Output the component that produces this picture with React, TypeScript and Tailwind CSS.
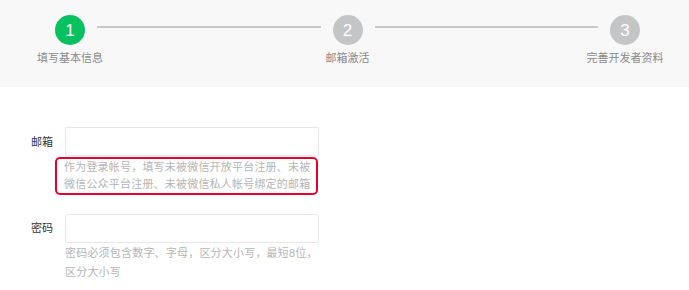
import React from 'react'

const font = { fontFamily: '"Helvetica Neue", "Liberation Sans", "Noto Sans CJK SC", sans-serif' }

function Step({ num, label, active }: { num: number; label: string; active?: boolean }) {
  return (
    <div className="flex w-[30px] shrink-0 flex-col items-center">
      <div
        className={`flex h-[30px] w-[30px] items-center justify-center rounded-full text-[17px] leading-none text-white ${
          active ? 'bg-[#07c160]' : 'bg-[#c4c5c7]'
        }`}
      >
        {num}
      </div>
      <div className="mt-[5px] whitespace-nowrap text-[11px] leading-[16px] text-[#8a8a8a]">{label}</div>
    </div>
  )
}

function Line() {
  return <div className="mx-[12px] mt-[11px] h-[2px] flex-1 bg-[#c9c9c9]" />
}

export default function App() {
  return (
    <div className="h-[290px] w-[689px] overflow-hidden bg-white" style={font}>
      {/* steps */}
      <div className="flex h-[87px] items-start bg-[#f8f8f8] pl-[55px] pr-[49px] pt-[15px]">
        <Step num={1} label="填写基本信息" active />
        <Line />
        <Step num={2} label="邮箱激活" />
        <Line />
        <Step num={3} label="完善开发者资料" />
      </div>

      {/* form */}
      <div className="flex flex-col pt-[40px]">
        <div className="flex items-start">
          <label className="w-[53px] shrink-0 pt-[7px] text-right text-[11px] leading-[16px] text-[#353535]">邮箱</label>
          <div className="ml-[12px] flex flex-col">
            <input className="h-[29px] w-[254px] rounded-[2px] border border-[#e7e7e7] bg-white outline-none" />
            <div className="-ml-[10px] mt-[1px] w-[263px] rounded-[5px] border-[2px] border-[#e8002a] pl-[7px] text-[11px] leading-[17px] tracking-[0.2px] text-[#b5b5b5]">
              <p>作为登录帐号，填写未被微信开放平台注册、未被</p>
              <p>微信公众平台注册、未被微信私人帐号绑定的邮箱</p>
            </div>
          </div>
        </div>

        <div className="mt-[19px] flex items-start">
          <label className="w-[53px] shrink-0 pt-[6px] text-right text-[11px] leading-[16px] text-[#353535]">密码</label>
          <div className="ml-[12px] flex flex-col">
            <input type="password" className="h-[29px] w-[254px] rounded-[2px] border border-[#e7e7e7] bg-white outline-none" />
            <div className="mt-[1px] w-[254px] text-[11px] leading-[19px] tracking-[0.2px] text-[#b5b5b5]">
              <p>密码必须包含数字、字母，区分大小写，最短8位，</p>
              <p>区分大小写</p>
            </div>
          </div>
        </div>
      </div>
    </div>
  )
}
